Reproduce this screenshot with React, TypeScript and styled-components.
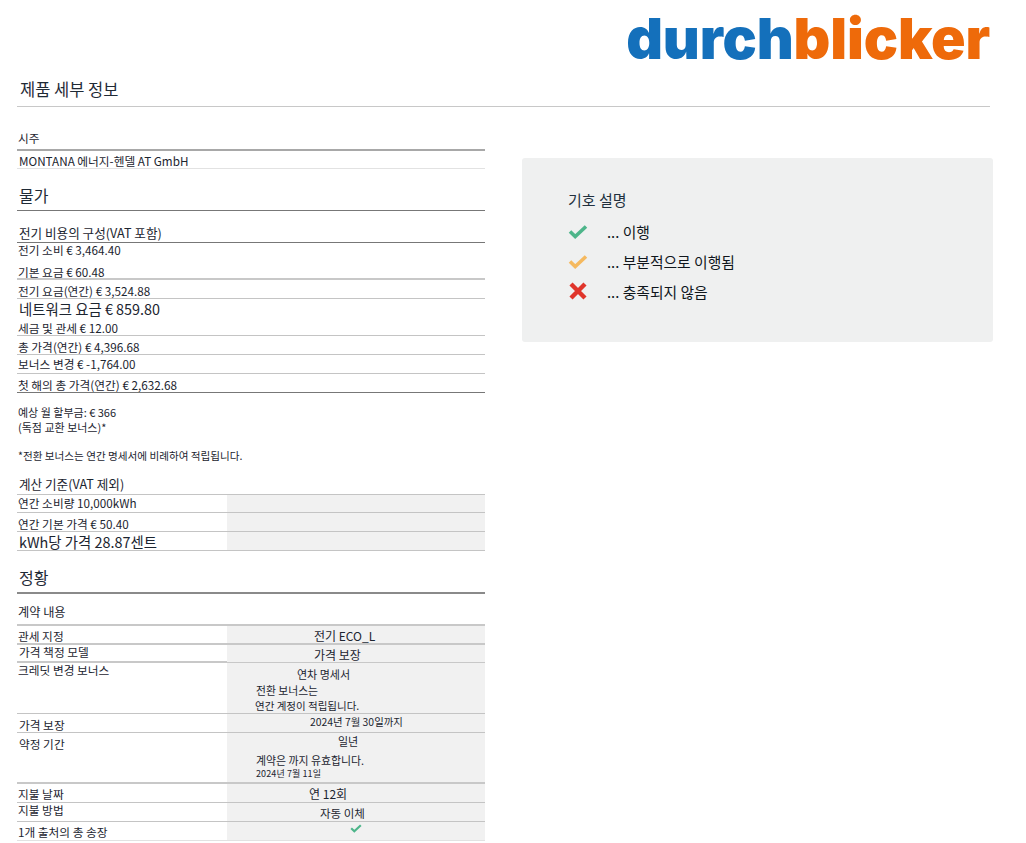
import styled, { createGlobalStyle } from 'styled-components';

const GlobalStyle = createGlobalStyle`
  html, body {
    margin: 0;
    padding: 0;
    background: #fff;
  }
  body {
    font-family: "Noto Sans CJK KR", "Noto Sans", sans-serif;
    color: #1c2530;
  }
`;

const lines = {
  none: 'border-bottom: 0;',
  faint: 'border-bottom: 1px solid #e2e2e2;',
  light: 'border-bottom: 1px solid #c4c4c4;',
  soft: 'border-bottom: 2px solid #c8c8c8;',
  mid: 'border-bottom: 2px solid #a8a8a8;',
  dark: 'border-bottom: 1px solid #777;',
  heavy: 'border-bottom: 2px solid #8a8a8a;',
};

type Line = keyof typeof lines;

const Page = styled.div`
  width: 976px;
  padding: 0 0 3px 17px;
`;

const LogoBar = styled.div`
  display: flex;
  justify-content: flex-end;
  height: 72px;
  width: 973px;
  box-sizing: border-box;
`;

const Logo = styled.div`
  font-family: Inter, "Liberation Sans", sans-serif;
  font-weight: 900;
  font-size: 57px;
  line-height: 72px;
  letter-spacing: -0.15px;
  color: #1470bb;
  margin-top: 3px;
  span {
    color: #ee6a0a;
  }
`;

const TitleBar = styled.div`
  width: 973px;
  height: 35px;
  box-sizing: border-box;
  padding: 5px 0 0 3px;
  border-bottom: 1px solid #c8c8c8;
  font-size: 16.5px;
  line-height: 24px;
  color: #1f2a36;
`;

const Columns = styled.div`
  display: flex;
  align-items: flex-start;
  gap: 37px;
`;

const Left = styled.div`
  width: 468px;
  flex: none;
`;

const Row = styled.div<{ $h: number; $top: number; $line: Line; $x?: number; $size?: number; $lh?: number }>`
  height: ${(p) => p.$h}px;
  box-sizing: border-box;
  padding-top: ${(p) => p.$top}px;
  padding-left: ${(p) => p.$x ?? 1}px;
  font-size: ${(p) => p.$size ?? 11.7}px;
  line-height: ${(p) => p.$lh ?? 14}px;
  white-space: nowrap;
  ${(p) => lines[p.$line]}
`;

const Heading = styled(Row)`
  font-size: 16px;
  line-height: 20px;
  color: #1f2a36;
`;

const Note = styled.p<{ $top: number; $size?: number }>`
  margin: ${(p) => p.$top}px 0 0 1px;
  font-size: ${(p) => p.$size ?? 11}px;
  line-height: 15px;
  white-space: pre-line;
`;

const TableRow = styled.div<{ $h: number; $line: Line }>`
  display: grid;
  grid-template-columns: 210px 258px;
  height: ${(p) => p.$h}px;
  box-sizing: border-box;
  ${(p) => lines[p.$line]}
`;

const Key = styled.div<{ $top: number; $size?: number; $lh?: number; $x?: number }>`
  padding-top: ${(p) => p.$top}px;
  padding-left: ${(p) => p.$x ?? 1}px;
  font-size: ${(p) => p.$size ?? 11.7}px;
  line-height: ${(p) => p.$lh ?? 14}px;
  white-space: nowrap;
`;

const Value = styled.div`
  background: #f1f1f1;
  display: flex;
  flex-direction: column;
`;

const ValueLine = styled.div<{ $x: number; $top: number; $size?: number; $lh?: number; $track?: number }>`
  padding-left: ${(p) => p.$x}px;
  margin-top: ${(p) => p.$top}px;
  font-size: ${(p) => p.$size ?? 12}px;
  line-height: ${(p) => p.$lh ?? 14}px;
  letter-spacing: ${(p) => p.$track ?? 0}px;
  white-space: nowrap;
`;

const Legend = styled.aside`
  width: 471px;
  height: 184px;
  flex: none;
  box-sizing: border-box;
  margin-top: 51px;
  padding: 32px 0 0 46px;
  background: #eff0f0;
  border-radius: 3px;
`;

const LegendTitle = styled.div`
  font-size: 15px;
  line-height: 20px;
  color: #22303e;
  margin-bottom: 6px;
`;

const LegendRow = styled.div`
  display: flex;
  align-items: center;
  height: 30px;
  font-size: 14.8px;
  color: #10161c;
`;

const LegendIcon = styled.svg`
  width: 20px;
  height: 20px;
  margin-right: 19px;
  flex: none;
`;

const SmallCheck = styled.svg`
  display: block;
  width: 12px;
  height: 12px;
  margin: 0 0 0 123px;
`;

function Check({ color }: { color: string }) {
  return (
    <LegendIcon viewBox="0 0 20 20">
      <path d="M2 10.5 L7.2 15.5 L18 5.5" fill="none" stroke={color} strokeWidth="3.6" />
    </LegendIcon>
  );
}

function Cross() {
  return (
    <LegendIcon viewBox="0 0 20 20">
      <path d="M3 3 L17 17 M17 3 L3 17" fill="none" stroke="#e0352b" strokeWidth="4.4" />
    </LegendIcon>
  );
}

export default function App() {
  return (
    <Page>
      <GlobalStyle />
      <LogoBar>
        <Logo>
          durch<span>blicker</span>
        </Logo>
      </LogoBar>
      <TitleBar>제품 세부 정보</TitleBar>
      <Columns>
        <Left>
          <Row $h={44} $top={24} $line="mid">시주</Row>
          <Row $h={18} $top={3} $x={2} $line="faint">MONTANA 에너지-헨델 AT GmbH</Row>

          <Heading $h={42} $top={16} $x={2} $line="dark">물가</Heading>
          <Row $h={32} $top={14} $x={2} $size={12.6} $lh={16} $line="dark">전기 비용의 구성(VAT 포함)</Row>
          <Row $h={18} $top={0} $line="none">전기 소비 € 3,464.40</Row>
          <Row $h={19} $top={4} $line="soft">기본 요금 € 60.48</Row>
          <Row $h={19} $top={4} $line="light">전기 요금(연간) € 3,524.88</Row>
          <Row $h={20} $top={0} $x={2} $size={14.4} $lh={20} $line="none">네트워크 요금 € 859.80</Row>
          <Row $h={17} $top={2} $line="light">세금 및 관세 € 12.00</Row>
          <Row $h={19} $top={4} $line="light">총 가격(연간) € 4,396.68</Row>
          <Row $h={19} $top={2} $line="light">보너스 변경 € -1,764.00</Row>
          <Row $h={19} $top={4} $line="dark">첫 해의 총 가격(연간) € 2,632.68</Row>

          <Note $top={12}>{'예상 월 할부금: € 366\n(독점 교환 보너스)*'}</Note>
          <Note $top={13} $size={10.6}>*전환 보너스는 연간 명세서에 비례하여 적립됩니다.</Note>

          <Row $h={32} $top={13} $x={2} $size={12.6} $lh={16} $line="light">계산 기준(VAT 제외)</Row>
          <TableRow $h={18} $line="light">
            <Key $top={1}>연간 소비량 10,000kWh</Key>
            <Value />
          </TableRow>
          <TableRow $h={19} $line="light">
            <Key $top={4}>연간 기본 가격 € 50.40</Key>
            <Value />
          </TableRow>
          <TableRow $h={19} $line="light">
            <Key $top={1} $x={2} $size={14.4} $lh={17}>kWh당 가격 28.87센트</Key>
            <Value />
          </TableRow>

          <Heading $h={43} $top={16} $x={2} $line="heavy">정황</Heading>
          <Row $h={32} $top={11} $size={12.2} $lh={15} $line="soft">계약 내용</Row>

          <TableRow $h={19} $line="soft">
            <Key $top={3}>관세 지정</Key>
            <Value><ValueLine $x={87} $top={3}>전기 ECO_L</ValueLine></Value>
          </TableRow>
          <TableRow $h={18} $line="soft">
            <Key $top={0} $x={2}>가격 책정 모델</Key>
            <Value><ValueLine $x={87} $top={3}>가격 보장</ValueLine></Value>
          </TableRow>
          <TableRow $h={51} $line="light">
            <Key $top={0}>크레딧 변경 보너스</Key>
            <Value>
              <ValueLine $x={70} $top={4} $size={11}>연차 명세서</ValueLine>
              <ValueLine $x={29} $top={2} $size={10.8}>전환 보너스는</ValueLine>
              <ValueLine $x={28} $top={2} $size={10.5}>연간 계정이 적립됩니다.</ValueLine>
            </Value>
          </TableRow>
          <TableRow $h={19} $line="light">
            <Key $top={4} $x={2}>가격 보장</Key>
            <Value><ValueLine $x={83} $top={1} $size={10.4}>2024년 7월 30일까지</ValueLine></Value>
          </TableRow>
          <TableRow $h={51} $line="soft">
            <Key $top={4} $x={2}>약정 기간</Key>
            <Value>
              <ValueLine $x={111} $top={1} $size={11}>일년</ValueLine>
              <ValueLine $x={29} $top={5} $size={10.9}>계약은 까지 유효합니다.</ValueLine>
              <ValueLine $x={29} $top={1} $size={9} $lh={12} $track={0.1}>2024년 7월 11일</ValueLine>
            </Value>
          </TableRow>
          <TableRow $h={19} $line="light">
            <Key $top={3}>지불 날짜</Key>
            <Value><ValueLine $x={82} $top={3}>연 12회</ValueLine></Value>
          </TableRow>
          <TableRow $h={19} $line="light">
            <Key $top={0}>지불 방법</Key>
            <Value><ValueLine $x={93} $top={3} $size={11.5}>자동 이체</ValueLine></Value>
          </TableRow>
          <TableRow $h={19} $line="faint">
            <Key $top={3}>1개 출처의 총 송장</Key>
            <Value>
              <SmallCheck viewBox="0 0 20 20">
                <path d="M2 10.5 L7.2 15.5 L18 5.5" fill="none" stroke="#4db58a" strokeWidth="3.6" />
              </SmallCheck>
            </Value>
          </TableRow>
        </Left>

        <Legend>
          <LegendTitle>기호 설명</LegendTitle>
          <LegendRow><Check color="#4db58a" />... 이행</LegendRow>
          <LegendRow><Check color="#f5b95f" />... 부분적으로 이행됨</LegendRow>
          <LegendRow><Cross />... 충족되지 않음</LegendRow>
        </Legend>
      </Columns>
    </Page>
  );
}
